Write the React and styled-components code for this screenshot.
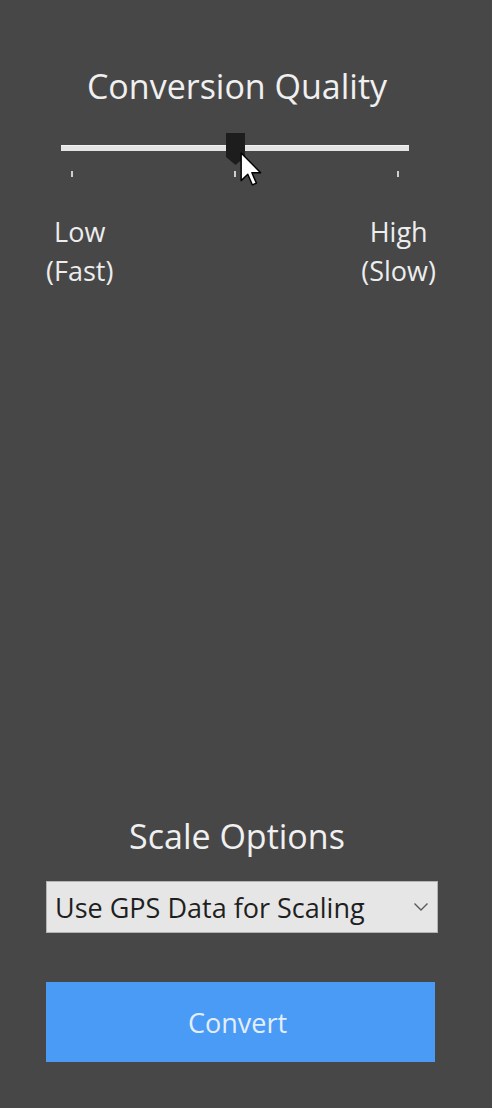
import React from 'react'
import styled, { createGlobalStyle } from 'styled-components'

const GlobalStyle = createGlobalStyle`
    html, body {
        margin: 0;
        padding: 0;
        background-color: #474747;
    }
    * {
        box-sizing: border-box;
    }
`

const App = () => {
    return (
        <Page>
            <GlobalStyle />
            <Section>
                <Heading>Conversion Quality</Heading>
                <Slider>
                    <Track />
                    <TickRow>
                        <Tick />
                        <Tick />
                        <Tick />
                    </TickRow>
                    <Thumb width="19" height="32" viewBox="0 0 19 32">
                        <path d="M0 0 H19 V24 L9.5 32 L0 24 Z" fill="#1d1d1d" />
                    </Thumb>
                    <Cursor width="22" height="34" viewBox="0 0 12 19">
                        <path
                            d="M0.5 0.5 V16 L4.2 12.4 L6.8 18.4 L9 17.4 L6.5 11.6 L11.4 11.6 Z"
                            fill="#fff"
                            stroke="#000"
                            strokeWidth="0.8"
                            strokeLinejoin="round"
                        />
                    </Cursor>
                </Slider>
                <LabelRow>
                    <Label>Low<br />(Fast)</Label>
                    <Label>High<br />(Slow)</Label>
                </LabelRow>
            </Section>

            <Spacer />

            <Section>
                <Heading>Scale Options</Heading>
                <Select>
                    <span>Use GPS Data for Scaling</span>
                    <svg width="16" height="10" viewBox="0 0 16 10">
                        <path d="M1.5 1.5 L8 8 L14.5 1.5" fill="none" stroke="#5a5a5a" strokeWidth="1.4" />
                    </svg>
                </Select>
                <ConvertBtn>Convert</ConvertBtn>
            </Section>
        </Page>
    )
}

export default App

const Page = styled.div`
    height: 1108px;
    display: flex;
    flex-direction: column;
    padding: 64px 54px 46px 46px;
    font-family: "Open Sans", "Noto Sans", sans-serif;
    color: #efefef;
`

const Section = styled.div`
    display: flex;
    flex-direction: column;
`

const Spacer = styled.div`
    flex: 1;
`

const Heading = styled.div`
    font-size: 34px;
    line-height: 44px;
    text-align: center;
    padding-right: 10px;
    color: #f0f0f0;
`

const Slider = styled.div`
    position: relative;
    width: 348px;
    margin: 25px 0 0 15px;
    padding-top: 12px;
`

const Track = styled.div`
    height: 6px;
    background-color: #e4e4e4;
    border-top: 1px solid #f2f2f2;
`

const TickRow = styled.div`
    display: flex;
    justify-content: space-between;
    margin-top: 20px;
    padding: 0 10px 0 10px;
`

const Tick = styled.div`
    width: 2px;
    height: 6px;
    background-color: #cfcfcf;
`

const Thumb = styled.svg`
    position: absolute;
    top: 0;
    left: 165px;
`

const Cursor = styled.svg`
    position: absolute;
    top: 19px;
    left: 179px;
`

const LabelRow = styled.div`
    display: flex;
    justify-content: space-between;
    margin-top: 35px;
    padding-right: 2px;
`

const Label = styled.div`
    font-size: 27px;
    line-height: 39px;
    text-align: center;
    color: #ededed;
`

const Select = styled.div`
    display: flex;
    align-items: center;
    justify-content: space-between;
    height: 52px;
    margin-top: 23px;
    padding: 0 8px 0 8px;
    background-color: #e6e6e6;
    border: 1px solid #b4b4b4;
    color: #1f1f1f;
    font-size: 27px;
`

const ConvertBtn = styled.button`
    height: 80px;
    width: 389px;
    margin-top: 49px;
    padding: 0 6px 0 0;
    border: none;
    background-color: #4a9bf6;
    color: #e4eefa;
    font-family: "Open Sans", "Noto Sans", sans-serif;
    font-size: 27px;
    cursor: pointer;
`
